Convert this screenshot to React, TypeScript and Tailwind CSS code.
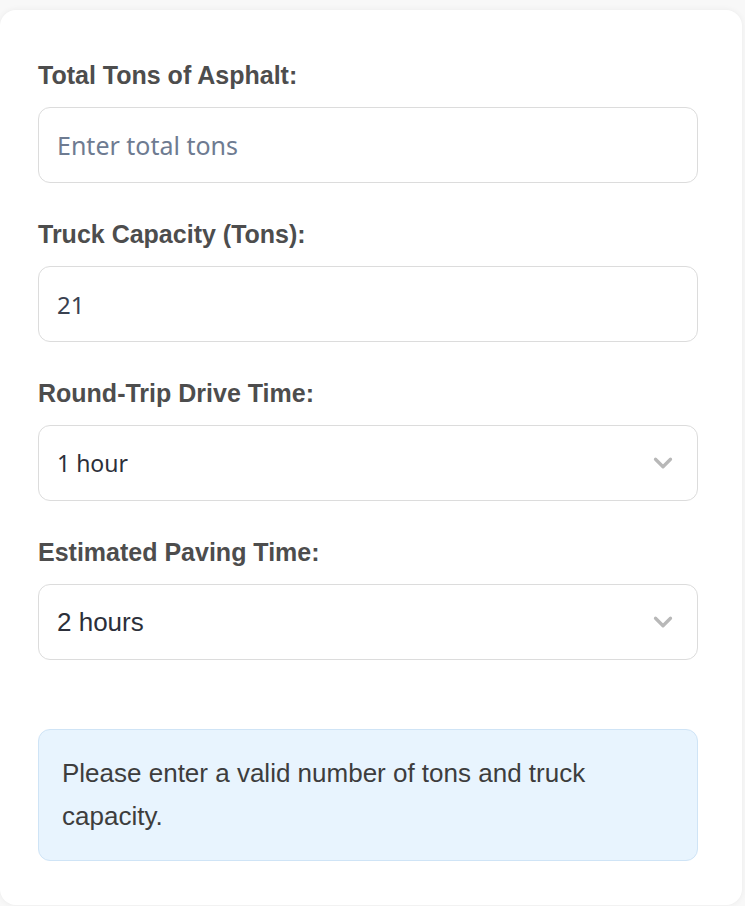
import { ChevronDown } from 'lucide-react';

const labelCls =
  "block font-['Liberation_Sans',Arial,sans-serif] font-bold text-[25px] leading-[26px] text-[#4d4d4d] mb-[19px]";

const boxCls =
  'w-full h-[76px] rounded-xl border border-[#dcdcdc] bg-white px-[18px] outline-none';

export default function App() {
  return (
    <div className="min-h-[906px] bg-[#f8f8f8] pt-[10px] pb-[3px]">
      <div className="w-[742px] rounded-2xl bg-white shadow-[0_0_6px_rgba(0,0,0,0.06)] pl-[38px] pr-[44px] pt-[52px] pb-[44px]">
        <div className="mb-[38px]">
          <label className={labelCls}>Total Tons of Asphalt:</label>
          <input
            type="text"
            placeholder="Enter total tons"
            className={`${boxCls} text-[25px] font-['Noto_Sans',sans-serif] text-[#333] placeholder:text-[#6e7b91]`}
          />
        </div>

        <div className="mb-[38px]">
          <label className={labelCls}>Truck Capacity (Tons):</label>
          <input
            type="text"
            defaultValue="21"
            className={`${boxCls} text-[24px] font-['Noto_Sans',sans-serif] text-[#3a4150]`}
          />
        </div>

        <div className="mb-[38px]">
          <label className={labelCls}>Round-Trip Drive Time:</label>
          <div className="relative">
            <select
              defaultValue="1"
              className={`${boxCls} text-[23px] appearance-none font-['Noto_Sans',sans-serif] text-[#2c2f3a]`}
            >
              <option value="1">1 hour</option>
              <option value="2">2 hours</option>
              <option value="3">3 hours</option>
            </select>
            <ChevronDown
              className="pointer-events-none absolute right-[20px] top-1/2 -translate-y-1/2 text-[#b8b8b8]"
              size={30}
              strokeWidth={2.6}
            />
          </div>
        </div>

        <div className="mb-[69px]">
          <label className={labelCls}>Estimated Paving Time:</label>
          <div className="relative">
            <select
              defaultValue="2"
              className={`${boxCls} text-[26px] appearance-none font-['Liberation_Sans',Arial,sans-serif] text-[#2c2f3a]`}
            >
              <option value="1">1 hour</option>
              <option value="2">2 hours</option>
              <option value="4">4 hours</option>
            </select>
            <ChevronDown
              className="pointer-events-none absolute right-[20px] top-1/2 -translate-y-1/2 text-[#b8b8b8]"
              size={30}
              strokeWidth={2.6}
            />
          </div>
        </div>

        <div className="rounded-xl border border-[#cfe4f6] bg-[#e8f4fe] px-[23px] py-[22px]">
          <p className="font-['Liberation_Sans',Arial,sans-serif] text-[26px] leading-[43px] text-[#3d3d3d]">
            Please enter a valid number of tons and truck capacity.
          </p>
        </div>
      </div>
    </div>
  );
}
